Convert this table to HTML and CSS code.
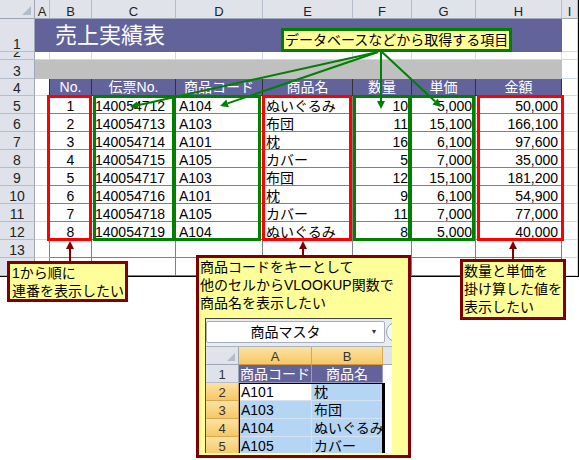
FILE: index.html
```html
<!DOCTYPE html>
<html lang="ja">
<head>
<meta charset="utf-8">
<title>売上実績表</title>
<link rel="stylesheet" href="styles.css">
</head>
<body>
<div class="page">
  <div class="sheet">
    <div class="corner"></div>
    <div class="ch">A</div><div class="ch">B</div><div class="ch">C</div><div class="ch">D</div><div class="ch">E</div><div class="ch">F</div><div class="ch">G</div><div class="ch">H</div><div class="ch">I</div>

    <div class="rh">1</div><div class="title">売上実績表</div><div class="g"></div>

    <div class="rh">2</div><div class="g"></div><div class="g"></div><div class="g"></div><div class="g"></div><div class="g"></div><div class="g"></div><div class="g"></div><div class="g"></div><div class="g"></div>

    <div class="rh">3</div><div class="band"></div><div class="g"></div>

    <div class="rh">4</div><div class="g dk"></div><div class="hd">No.</div><div class="hd">伝票No.</div><div class="hd">商品コード</div><div class="hd">商品名</div><div class="hd">数量</div><div class="hd">単価</div><div class="hd">金額</div><div class="g"></div>

    <div class="rh">5</div><div class="g ae"></div><div class="d c">1</div><div class="d l">140054712</div><div class="d l">A104</div><div class="d l">ぬいぐるみ</div><div class="d r">10</div><div class="d r">5,000</div><div class="d r">50,000</div><div class="g"></div>
    <div class="rh">6</div><div class="g ae"></div><div class="d c">2</div><div class="d l">140054713</div><div class="d l">A103</div><div class="d l">布団</div><div class="d r">11</div><div class="d r">15,100</div><div class="d r">166,100</div><div class="g"></div>
    <div class="rh">7</div><div class="g ae"></div><div class="d c">3</div><div class="d l">140054714</div><div class="d l">A101</div><div class="d l">枕</div><div class="d r">16</div><div class="d r">6,100</div><div class="d r">97,600</div><div class="g"></div>
    <div class="rh">8</div><div class="g ae"></div><div class="d c">4</div><div class="d l">140054715</div><div class="d l">A105</div><div class="d l">カバー</div><div class="d r">5</div><div class="d r">7,000</div><div class="d r">35,000</div><div class="g"></div>
    <div class="rh">9</div><div class="g ae"></div><div class="d c">5</div><div class="d l">140054717</div><div class="d l">A103</div><div class="d l">布団</div><div class="d r">12</div><div class="d r">15,100</div><div class="d r">181,200</div><div class="g"></div>
    <div class="rh">10</div><div class="g ae"></div><div class="d c">6</div><div class="d l">140054716</div><div class="d l">A101</div><div class="d l">枕</div><div class="d r">9</div><div class="d r">6,100</div><div class="d r">54,900</div><div class="g"></div>
    <div class="rh">11</div><div class="g ae"></div><div class="d c">7</div><div class="d l">140054718</div><div class="d l">A105</div><div class="d l">カバー</div><div class="d r">11</div><div class="d r">7,000</div><div class="d r">77,000</div><div class="g"></div>
    <div class="rh">12</div><div class="g ae"></div><div class="d c">8</div><div class="d l">140054719</div><div class="d l">A104</div><div class="d l">ぬいぐるみ</div><div class="d r">8</div><div class="d r">5,000</div><div class="d r">40,000</div><div class="g"></div>
    <div class="rh">13</div><div class="g ae"></div><div class="d"></div><div class="d"></div><div class="d"></div><div class="d"></div><div class="d"></div><div class="d"></div><div class="d"></div><div class="g"></div>
    <div class="rh">14</div><div class="g ae"></div><div class="d"></div><div class="d"></div><div class="d"></div><div class="d"></div><div class="d"></div><div class="d"></div><div class="d"></div><div class="g"></div>
  </div>

  <div class="mark red m-b"></div>
  <div class="mark green m-c"></div>
  <div class="mark green m-d"></div>
  <div class="mark red m-e"></div>
  <div class="mark green m-f"></div>
  <div class="mark green m-g"></div>
  <div class="mark red m-h"></div>

  <svg class="arrows" width="579" height="460" viewBox="0 0 579 460">
    <g stroke="#008000" stroke-width="2" fill="#008000">
      <line x1="378" y1="52" x2="137.8" y2="105.3"/>
      <polygon stroke="none" points="130,107 138.7,109.2 136.9,101.4"/>
      <line x1="378" y1="52" x2="227.6" y2="103.4"/>
      <polygon stroke="none" points="220,106 228.9,107.2 226.3,99.6"/>
      <line x1="381" y1="52" x2="381" y2="101"/>
      <polygon stroke="none" points="381,109 385,101 377,101"/>
      <line x1="382" y1="52" x2="435.2" y2="101.6"/>
      <polygon stroke="none" points="441,107 432.4,104.5 437.9,98.6"/>
    </g>
    <g stroke="#800000" stroke-width="2" fill="#800000">
      <line x1="70" y1="248" x2="70" y2="262"/>
      <polygon stroke="none" points="70,241 74,249 66,249"/>
      <line x1="303" y1="248" x2="303" y2="256"/>
      <polygon stroke="none" points="303,241 307,249 299,249"/>
      <line x1="513" y1="248" x2="513" y2="260"/>
      <polygon stroke="none" points="513,241 517,249 509,249"/>
    </g>
  </svg>

  <div class="note note-top">データベースなどから取得する項目</div>
  <div class="note note-no">1から順に<br>連番を表示したい</div>
  <div class="note note-amt">数量と単価を<br>掛け算した値を<br>表示したい</div>
  <div class="note note-mid">
    <div class="note-text">商品コードをキーとして<br>他のセルからVLOOKUP関数で<br>商品名を表示したい</div>
    <div class="mini">
      <div class="mini-bar">
        <div class="mini-name"><span class="mini-title">商品マスタ</span><span class="caret">▼</span></div>
        <div class="mini-btn"></div>
      </div>
      <div class="mini-grid">
        <div class="mcorner"></div><div class="mh">A</div><div class="mh">B</div><div class="mx"></div>
        <div class="mrh">1</div><div class="mp">商品コード</div><div class="mp">商品名</div><div class="mw2"></div>
        <div class="mrh sel">2</div><div class="mc mw">A101</div><div class="mc mb">枕</div><div class="mw2"></div>
        <div class="mrh sel">3</div><div class="mc mb">A103</div><div class="mc mb">布団</div><div class="mw2"></div>
        <div class="mrh sel">4</div><div class="mc mb">A104</div><div class="mc mb">ぬいぐるみ</div><div class="mw2"></div>
        <div class="mrh sel">5</div><div class="mc mb">A105</div><div class="mc mb">カバー</div><div class="mw2"></div>
      </div>
      <div class="mini-sel"></div>
    </div>
  </div>
</div>
</body>
</html>
```
FILE: styles.css
```css
* { box-sizing: border-box; }
html, body { margin: 0; padding: 0; background: #fff; }
body {
  font-family: "Liberation Sans", "Noto Sans CJK JP", sans-serif;
  font-size: 14px;
  color: #000;
}
.page { position: relative; width: 579px; height: 460px; overflow: hidden; }

/* spreadsheet grid */
.sheet {
  display: grid;
  grid-template-columns: 35px 15px 42px 84px 87px 90px 59px 64px 86px 16px;
  grid-template-rows: 19px 33px 8px 19px 17px repeat(10, 18px);
  width: 579px;
  border-right: 1px solid #000;
  border-bottom: 1px solid #000;
}
.corner {
  position: relative;
  background: #e0e3ea;
  border-right: 1px solid #9ea7b7;
  border-bottom: 1px solid #9ea7b7;
}
.corner::after {
  content: "";
  position: absolute;
  right: 3px;
  bottom: 3px;
  border-left: 9px solid transparent;
  border-bottom: 9px solid #b4bcc8;
}
.ch {
  background: #e0e3ea;
  border-right: 1px solid #b6bdca;
  border-bottom: 1px solid #9ea7b7;
  display: flex;
  align-items: flex-end;
  justify-content: center;
  font-size: 13px;
  line-height: 13px;
  color: #222;
}
.rh {
  background: #dfe2eb;
  border-right: 1px solid #9ea7b7;
  border-bottom: 1px solid #b6bdca;
  display: flex;
  align-items: flex-end;
  justify-content: center;
  overflow: hidden;
  line-height: 14px;
  color: #222;
}
.g { border-right: 1px solid #d0d7e5; border-bottom: 1px solid #d0d7e5; }
.g.ae { border-right-color: #808080; }
.g.dk { border-right-color: #333; }
.title {
  grid-column: 2 / 10;
  background: #63639b;
  color: #fff;
  font-size: 22px;
  line-height: 22px;
  display: flex;
  align-items: center;
  padding: 1px 0 0 20px;
}
.band { grid-column: 2 / 10; background: #c0c0c0; }
.hd {
  background: #63639b;
  color: #fff;
  border-right: 1px solid #333;
  border-bottom: 1px solid #333;
  display: flex;
  align-items: center;
  justify-content: center;
  line-height: 14px;
  white-space: nowrap;
}
.d {
  border-right: 1px solid #808080;
  border-bottom: 1px solid #808080;
  display: flex;
  align-items: flex-end;
  line-height: 14px;
  padding: 0 3px;
  white-space: nowrap;
  overflow: hidden;
}
.d.c { justify-content: center; }
.d.l { justify-content: flex-start; }
.d.r { justify-content: flex-end; }

/* highlight frames */
.mark { position: absolute; top: 95px; height: 146px; border: 3px solid; }
.red { border-color: #ff0000; }
.green { border-color: #008000; }
.m-b { left: 47px; width: 45px; }
.m-c { left: 93px; width: 82px; }
.m-d { left: 173px; width: 88px; }
.m-e { left: 262px; width: 90px; }
.m-f { left: 353px; width: 58px; }
.m-g { left: 409px; width: 66px; }
.m-h { left: 477px; width: 87px; }

.arrows { position: absolute; left: 0; top: 0; }

/* callouts */
.note {
  position: absolute;
  background: #ffff99;
  font-size: 14px;
  line-height: 18px;
  white-space: nowrap;
}
.note-top {
  left: 281px; top: 28px; width: 231px; height: 24px;
  border: 3px solid #008000;
  padding-left: 1px;
  display: flex;
  align-items: center;
}
.note-no {
  left: 7px; top: 261px; width: 121px; height: 41px;
  border: 3px solid #800000;
  padding-left: 2px;
}
.note-amt {
  left: 460px; top: 259px; width: 106px; height: 61px;
  border: 3px solid #800000;
  padding-left: 1px;
}
.note-mid {
  left: 196px; top: 255px; width: 215px; height: 203px;
  border: 3px solid #800000;
  padding-left: 1px;
}

/* embedded master table picture */
.mini {
  position: relative;
  margin: 6px 0 0 5px;
  width: 187px;
  height: 135px;
  border-top: 1px solid #444;
  border-left: 1px solid #444;
  overflow: hidden;
  background: #fff;
  font-size: 14px;
  line-height: 14px;
}
.mini-bar {
  height: 28px;
  background: #e8ecf1;
  border-bottom: 1px solid #aab3c0;
  display: flex;
  gap: 1px;
  padding: 2px 0 0 0;
}
.mini-name {
  flex: none;
  width: 179px;
  height: 22px;
  background: #fff;
  border: 1px solid #a7afbb;
  border-radius: 2px;
  display: flex;
  align-items: center;
}
.mini-title { flex: 1; text-align: center; }
.caret { width: 20px; text-align: center; font-size: 7px; color: #333; }
.mini-btn {
  flex: none;
  width: 20px;
  height: 20px;
  margin-top: 1px;
  border: 1px solid #9aa3b0;
  border-radius: 50%;
  background: #f4f6f9;
}
.mini-grid {
  display: grid;
  grid-template-columns: 33px 73px 71px 9px;
  grid-template-rows: repeat(6, 18px);
}
.mcorner {
  position: relative;
  background: #e0e3ea;
  border-right: 1px solid #9ea7b7;
  border-bottom: 1px solid #9ea7b7;
}
.mcorner::after {
  content: "";
  position: absolute;
  right: 3px;
  bottom: 3px;
  border-left: 8px solid transparent;
  border-bottom: 8px solid #b4bcc8;
}
.mh {
  background: linear-gradient(#fbe2a4, #f6c865);
  border-right: 1px solid #d8a84c;
  border-bottom: 1px solid #d09a3a;
  display: flex;
  align-items: flex-end;
  justify-content: center;
  font-size: 13px;
  line-height: 15px;
  color: #333;
}
.mx { background: #e0e3ea; border-bottom: 1px solid #9ea7b7; }
.mrh {
  background: #dfe2eb;
  border-right: 1px solid #9ea7b7;
  border-bottom: 1px solid #b6bdca;
  display: flex;
  align-items: flex-end;
  justify-content: center;
  font-size: 13px;
  line-height: 15px;
  color: #333;
}
.mrh.sel {
  background: linear-gradient(#fbe2a4, #f6c865);
  border-bottom-color: #d8a84c;
  border-right-color: #d09a3a;
}
.mp {
  background: #63639b;
  color: #fff;
  border-right: 1px solid #9a9ac0;
  border-bottom: 1px solid #9a9ac0;
  display: flex;
  align-items: flex-end;
  justify-content: center;
  line-height: 15px;
  white-space: nowrap;
}
.mc {
  display: flex;
  align-items: flex-end;
  padding-left: 2px;
  line-height: 15px;
  white-space: nowrap;
  border-right: 1px solid #d6e2ef;
  border-bottom: 1px solid #d6e2ef;
}
.mb { background: #b5d5f5; }
.mw { background: #fff; }
.mw2 { background: #fff; }
.mini-sel {
  position: absolute;
  left: 33px;
  top: 64px;
  width: 146px;
  height: 80px;
  border: 1px solid #000;
  border-right-width: 3px;
}
```
